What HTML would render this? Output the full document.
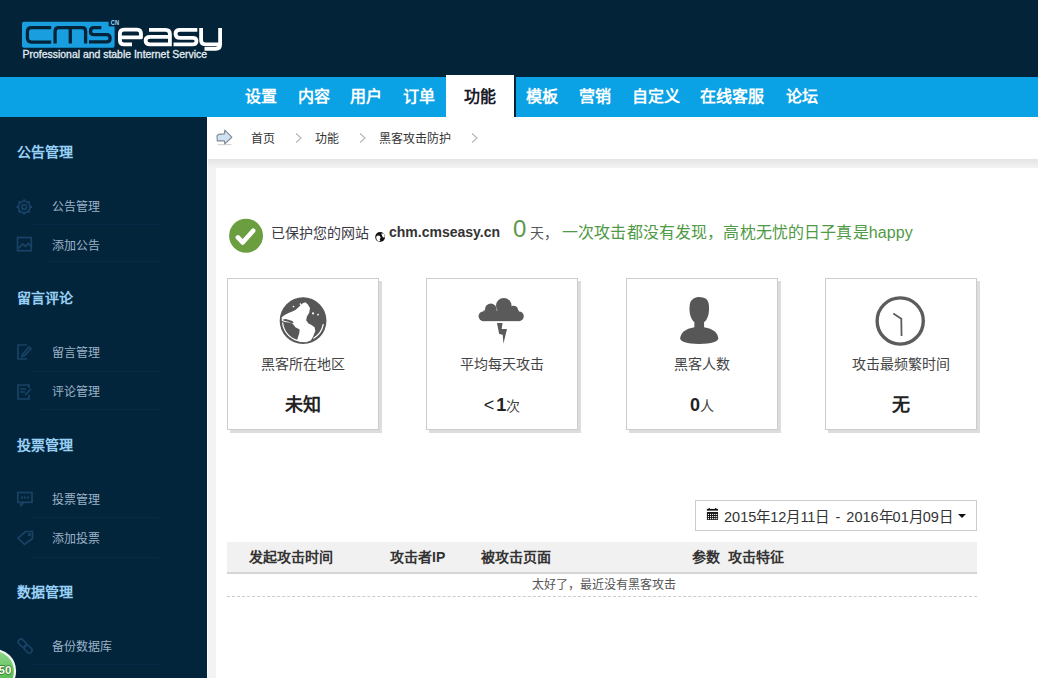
<!DOCTYPE html>
<html lang="zh-CN">
<head>
<meta charset="utf-8">
<style>
*{margin:0;padding:0;box-sizing:border-box;}
html,body{width:1038px;height:678px;overflow:hidden;background:#fff;}
body{position:relative;font-family:"Liberation Sans",sans-serif;}
.a{position:absolute;white-space:nowrap;}
#hdr{position:absolute;left:0;top:0;width:1038px;height:77px;background:#032438;}
#nav{position:absolute;left:0;top:77px;width:1038px;height:40px;background:#0aa1e5;}
.ni{position:absolute;top:0;height:40px;line-height:40px;font-size:16px;font-weight:bold;color:#fff;}
#act{position:absolute;left:446px;top:75px;width:70px;height:42px;background:#fff;border-right:2px solid #032438;}
#side{position:absolute;left:0;top:117px;width:207px;height:561px;background:#03253b;}
.sh{position:absolute;left:17px;font-size:14px;font-weight:bold;color:#98d0f6;line-height:20px;}
.si{position:absolute;left:52px;font-size:12px;color:#9bb2c7;line-height:18px;}
.sep{position:absolute;height:1px;background:#092a47;}
#main{position:absolute;left:207px;top:117px;width:831px;height:561px;background:#f3f3f3;}
#crumb{position:absolute;left:207px;top:117px;width:831px;height:42px;background:#fff;}
#shade{position:absolute;left:207px;top:159px;width:831px;height:9px;background:linear-gradient(#e4e4e4,#f3f3f3);}
#panel{position:absolute;left:216px;top:168px;width:822px;height:510px;background:#fff;}
#wl{position:absolute;left:207px;top:117px;width:1px;height:561px;background:#fff;}
.cr{position:absolute;top:131px;font-size:12px;line-height:16px;color:#333;}
.box{position:absolute;top:278px;width:152px;height:152px;border:1px solid #ccc;background:#fff;box-shadow:3px 3px 0 #ddd;}
.lbl{position:absolute;left:0;width:150px;top:76px;text-align:center;font-size:14px;color:#444;line-height:18px;}
.val{position:absolute;left:0;width:150px;top:114px;text-align:center;font-size:18px;font-weight:bold;color:#222;line-height:24px;}
</style>
</head>
<body>
<div id="hdr"></div>
<svg class="a" style="left:0;top:0" width="240" height="76" viewBox="0 0 240 76">
<rect x="22" y="21.8" width="92.6" height="26" rx="2" fill="#199fe0"/>
<rect x="108.6" y="16" width="8" height="10.4" fill="#032438"/>
<g fill="none" stroke="#032438" stroke-width="3.3" stroke-linejoin="round">
<path d="M51.2 27.7H31.4Q27.4 27.7 27.4 31.7V38.1Q27.4 42.1 31.4 42.1H51.2"/>
<path d="M55.1 43.6V31.3Q55.1 27.7 58.7 27.7H82.1Q85.6 27.7 85.6 31.3V43.6M70.3 27.7V43.6"/>
<path d="M101.3 27.7H94Q90.5 27.7 90.5 31.2Q90.5 34.7 94 34.7H106.5Q110.1 34.7 110.1 38.3Q110.1 41.9 106.5 41.9H89"/>
</g>
<text x="110.8" y="25.2" font-family="Liberation Sans" font-weight="bold" font-size="6.8" fill="#9edcff" textLength="8.2" lengthAdjust="spacingAndGlyphs">CN</text>
<g fill="none" stroke="#fff" stroke-width="3.8" stroke-linejoin="round">
<path d="M132 44.4H124Q119.9 44.4 119.9 40.3V33.8Q119.9 29.7 124 29.7H137Q141 29.7 141 33.8V37.4H119.9"/>
<path d="M149 29.9H165.5Q169.9 29.9 169.9 34.3V46.3M169.9 36.9H150Q145.6 36.9 145.6 40.5Q145.6 44.4 150 44.4H169.9"/>
<path d="M197.3 29.9H180Q175.5 29.9 175.5 33.7Q175.5 37.8 180 37.8H192.5Q196.5 37.8 196.5 40.9Q196.5 44.4 192.5 44.4H173.5"/>
<path d="M201.1 28V39.8Q201.1 44.4 205.5 44.4H220.1M220.1 28V44.6Q220.1 48.9 215.8 48.9H204.5"/>
</g>
<text x="22.6" y="57.6" font-family="Liberation Sans" font-size="10" fill="#e3ebf2" stroke="#e3ebf2" stroke-width="0.3" textLength="184.4" lengthAdjust="spacingAndGlyphs">Professional and stable Internet Service</text>
</svg>
<div id="nav"></div>
<div id="act"></div>
<div class="ni" style="left:245px;top:77px">设置</div>
<div class="ni" style="left:298px;top:77px">内容</div>
<div class="ni" style="left:350px;top:77px">用户</div>
<div class="ni" style="left:403px;top:77px">订单</div>
<div class="ni" style="left:464px;top:77px;color:#1a1a2a">功能</div>
<div class="ni" style="left:526px;top:77px">模板</div>
<div class="ni" style="left:579px;top:77px">营销</div>
<div class="ni" style="left:632px;top:77px">自定义</div>
<div class="ni" style="left:700px;top:77px">在线客服</div>
<div class="ni" style="left:786px;top:77px">论坛</div>

<div id="side"></div>
<div id="main"></div>
<div id="crumb"></div>
<div id="shade"></div>
<div id="panel"></div><div id="wl"></div>

<!-- sidebar -->
<div class="sh" style="top:142px">公告管理</div>
<div class="si" style="top:198px">公告管理</div>
<div class="sep" style="left:32px;top:224px;width:128px"></div>
<div class="si" style="top:237px">添加公告</div>
<div class="sep" style="left:47px;top:261px;width:113px"></div>

<div class="sh" style="top:288px">留言评论</div>
<div class="si" style="top:344px">留言管理</div>
<div class="sep" style="left:31px;top:371px;width:128px"></div>
<div class="si" style="top:383px">评论管理</div>
<div class="sep" style="left:40px;top:409px;width:120px"></div>

<div class="sh" style="top:435px">投票管理</div>
<div class="si" style="top:491px">投票管理</div>
<div class="sep" style="left:31px;top:517px;width:128px"></div>
<div class="si" style="top:530px">添加投票</div>
<div class="sep" style="left:31px;top:557px;width:128px"></div>

<div class="sh" style="top:582px">数据管理</div>
<div class="si" style="top:638px">备份数据库</div>
<div class="sep" style="left:32px;top:664px;width:128px"></div>

<svg class="a" style="left:0;top:117px" width="40" height="561" viewBox="0 117 40 561">
<g fill="none" stroke="#184266" stroke-width="1.7">
<circle cx="24.2" cy="207" r="5.8"/><circle cx="24.2" cy="207" r="2.3"/>
<path d="M24.2 199.2V201.2M24.2 212.8V214.8M16.4 207H18.4M30 207H32M18.7 201.5L20 202.8M28.4 211.2L29.7 212.5M18.7 212.5L20 211.2M28.4 202.8L29.7 201.5" stroke-width="2"/>
<rect x="17.5" y="237.5" width="13.8" height="13.2"/>
<path d="M18.5 248.5L22.5 244L25.5 246.5L28 243.5L31 246"/>
<path d="M27 345H18V359H27M29 347L31 349L24 356L22 356.5L22.5 354.5Z"/>
<path d="M29 388V385H18V399H29V395M20 389H26M20 392H25M31 389L25 395"/>
<rect x="17.8" y="492.5" width="14.2" height="9.8"/><path d="M21 502.5L21 505.5L24 502.5"/>
<path d="M21 497.5H29" stroke-dasharray="2 1" stroke-width="2"/>
<path d="M25.5 531.5L32.5 531.5L32.5 538.5L24.5 544.5L18 538Z"/><circle cx="29.5" cy="534.5" r="0.8"/>
<rect x="-4.6" y="-2.7" width="9.2" height="5.4" rx="2.7" transform="translate(22.3 643.2) rotate(45)"/><rect x="-4.6" y="-2.7" width="9.2" height="5.4" rx="2.7" transform="translate(28 649) rotate(45)"/>
</g>
</svg>
<svg class="a" style="left:0;top:640px" width="30" height="38" viewBox="0 640 30 38">
<defs><linearGradient id="bg1" x1="0" y1="0" x2="0" y2="1"><stop offset="0" stop-color="#8fd88a"/><stop offset="1" stop-color="#3fae3c"/></linearGradient></defs><circle cx="-6" cy="671" r="21" fill="url(#bg1)" stroke="#eef8ee" stroke-width="2.2"/>
<text x="-1.5" y="674.2" font-family="Liberation Sans" font-weight="bold" font-size="11.5" fill="#fbfdf0" stroke="#2f7d2b" stroke-width="1.4" paint-order="stroke">50</text>
</svg>
<!-- breadcrumb -->
<div class="cr" style="left:251px">首页</div>
<div class="cr" style="left:315px">功能</div>
<div class="cr" style="left:379px">黑客攻击防护</div>


<svg class="a" style="left:212px;top:124px" width="28" height="28" viewBox="0 0 678 678">
<path d="M140 500L470 500" stroke="#c9c9c9" stroke-width="22"/>
<path d="M120 290L160 250L300 240L310 150L480 320L310 480L300 410L130 410Z" fill="#cfe2f2" stroke="#7f8b96" stroke-width="28" stroke-linejoin="round"/>
</svg>
<svg class="a" style="left:294px;top:132px" width="9" height="12" viewBox="0 0 9 12"><path d="M2 1.5L7 6L2 10.5" fill="none" stroke="#b5b5b5" stroke-width="1.1"/></svg>
<svg class="a" style="left:358px;top:132px" width="9" height="12" viewBox="0 0 9 12"><path d="M2 1.5L7 6L2 10.5" fill="none" stroke="#b5b5b5" stroke-width="1.1"/></svg>
<svg class="a" style="left:470px;top:132px" width="9" height="12" viewBox="0 0 9 12"><path d="M2 1.5L7 6L2 10.5" fill="none" stroke="#b5b5b5" stroke-width="1.1"/></svg>
<!-- protected line -->
<svg class="a" style="left:224px;top:212px" width="46" height="46" viewBox="0 0 678 678">
<circle cx="325" cy="350" r="250" fill="#6a9e3f"/>
<path d="M205 375L275 450L430 275" fill="none" stroke="#fff" stroke-width="68" stroke-linecap="round" stroke-linejoin="round"/>
</svg>
<svg class="a" style="left:370px;top:226px" width="22" height="22" viewBox="0 0 678 678">
<circle cx="312" cy="338" r="152" fill="#111"/>
<path d="M190 330L235 290L300 300L330 360L300 400L320 470L250 470L200 410Z M350 230L420 230L455 300L445 360L395 350L370 290Z" fill="#fff"/>
</svg>
<div class="a" style="left:271px;top:224px;font-size:14px;line-height:18px;color:#3a3a45">已保护您的网站</div>
<div class="a" style="left:389px;top:223px;font-size:14px;line-height:18px;font-weight:bold;color:#333">chm.cmseasy.cn</div>
<div class="a" style="left:513px;top:215px;font-size:24px;line-height:28px;color:#5a9a4a">0</div>
<div class="a" style="left:530px;top:224px;font-size:14px;line-height:18px;color:#555">天，</div>
<div class="a" style="left:562px;top:223px;font-size:16px;line-height:20px;color:#4f9a45;letter-spacing:0.14px">一次攻击都没有发现，高枕无忧的日子真是happy</div>

<!-- boxes -->
<div class="box" style="left:227px"><div class="lbl">黑客所在地区</div><div class="val">未知</div></div>
<div class="box" style="left:426px"><div class="lbl">平均每天攻击</div><div class="val"><span style="font-weight:normal;margin-right:2px">&lt;</span>1<span style="font-size:14px;font-weight:normal;color:#444">次</span></div></div>
<div class="box" style="left:626px"><div class="lbl">黑客人数</div><div class="val">0<span style="font-size:14px;font-weight:normal;color:#444">人</span></div></div>
<div class="box" style="left:825px"><div class="lbl">攻击最频繁时间</div><div class="val">无</div></div>


<!-- content icons -->
<svg class="a" style="left:277px;top:295px" width="52" height="52" viewBox="0 0 678 678">
<circle cx="340" cy="335" r="305" fill="#575757"/>
<path d="M330 110L300 140L270 170L240 195L200 215L150 235L100 260L62 290L62 335L100 352L160 358L205 375L240 420L295 450L290 500L270 560L262 592L300 612L380 616L440 592L460 560L470 540L500 470L490 420L450 390L410 370L380 330L390 280L420 230L430 170L400 120L370 95Z" fill="#fff"/>
<path d="M73 358A268 268 0 0 0 293 599M604 381A268 268 0 0 1 474 567" fill="none" stroke="#fff" stroke-width="16"/>
<path d="M70 322L110 312L150 322L200 338L218 362L190 368L150 348L100 340Z" fill="#575757"/>
<g fill="#fff"><circle cx="470" cy="240" r="14"/><circle cx="535" cy="255" r="12"/><circle cx="215" cy="150" r="11"/><circle cx="305" cy="118" r="11"/></g>
</svg>
<svg class="a" style="left:470px;top:290px" width="62" height="60" viewBox="0 0 701 678">
<g fill="#5a5a5a">
<circle cx="152" cy="297" r="55"/><circle cx="235" cy="218" r="65"/><circle cx="382" cy="178" r="88"/><circle cx="492" cy="230" r="52"/><circle cx="553" cy="297" r="55"/>
<rect x="152" y="230" width="401" height="122"/>
<path d="M305 372L368 372L358 440L418 440L378 608L370 505L330 498Z"/>
</g>
</svg>
<svg class="a" style="left:668px;top:290px" width="62" height="60" viewBox="0 0 701 678">
<g fill="#575757">
<path d="M242 215Q238 95 335 80Q395 76 430 100Q468 130 464 225Q460 310 415 360L290 360Q245 310 242 215Z"/>
<rect x="298" y="320" width="110" height="110"/>
<path d="M138 545Q145 448 298 420L408 420Q562 448 568 545Q568 605 352 610Q138 605 138 545Z"/>
</g>
</svg>
<svg class="a" style="left:869px;top:290px" width="62" height="60" viewBox="0 0 701 678">
<circle cx="353" cy="350" r="261" fill="none" stroke="#5c5c5c" stroke-width="38"/>
<path d="M275 265L365 325L368 520" fill="none" stroke="#5c5c5c" stroke-width="20"/>
</svg>
<!-- date range -->
<div class="a" style="left:695px;top:500px;width:282px;height:31px;border:1px solid #ccc;background:#fff"></div>
<div class="a" style="left:724px;top:508px;font-size:14.5px;line-height:18px;color:#333;word-spacing:2px">2015年12月11日 - 2016年01月09日</div>


<svg class="a" style="left:700px;top:502px" width="30" height="26" viewBox="0 0 782 678">
<rect x="180" y="180" width="290" height="45" fill="#111"/>
<rect x="225" y="155" width="30" height="30" fill="#111"/><rect x="395" y="155" width="30" height="30" fill="#111"/>
<rect x="180" y="262" width="290" height="205" fill="#111"/>
<g fill="#fff"><rect x="205" y="310" width="30" height="30"/><rect x="260" y="310" width="30" height="30"/><rect x="315" y="310" width="30" height="30"/><rect x="370" y="310" width="30" height="30"/><rect x="420" y="310" width="30" height="30"/>
<rect x="205" y="365" width="30" height="30"/><rect x="260" y="365" width="30" height="30"/><rect x="315" y="365" width="30" height="30"/><rect x="370" y="365" width="30" height="30"/><rect x="420" y="365" width="30" height="30"/>
<rect x="205" y="418" width="30" height="30"/><rect x="260" y="418" width="30" height="30"/><rect x="315" y="418" width="30" height="30"/><rect x="370" y="418" width="30" height="30"/><rect x="420" y="418" width="30" height="30"/></g>
</svg>
<svg class="a" style="left:957px;top:513px" width="10" height="6" viewBox="0 0 10 6"><path d="M1 1H9L5 5Z" fill="#111"/></svg>
<!-- table -->
<div class="a" style="left:227px;top:542px;width:750px;height:32px;background:#f1f1f1;border-bottom:2px solid #d5d5d5"></div>
<div class="a th" style="left:249px;top:548px;font-size:14px;line-height:18px;font-weight:bold;color:#333">发起攻击时间</div>
<div class="a th" style="left:390px;top:548px;font-size:14px;line-height:18px;font-weight:bold;color:#333">攻击者IP</div>
<div class="a th" style="left:481px;top:548px;font-size:14px;line-height:18px;font-weight:bold;color:#333">被攻击页面</div>
<div class="a th" style="left:692px;top:548px;font-size:14px;line-height:18px;font-weight:bold;color:#333">参数</div>
<div class="a th" style="left:728px;top:548px;font-size:14px;line-height:18px;font-weight:bold;color:#333">攻击特征</div>
<div class="a" style="left:532px;top:577px;font-size:12px;line-height:16px;color:#555">太好了，最近没有黑客攻击</div>
<div class="a" style="left:227px;top:596px;width:750px;height:0;border-top:1px dashed #ccc"></div>

</body>
</html>
